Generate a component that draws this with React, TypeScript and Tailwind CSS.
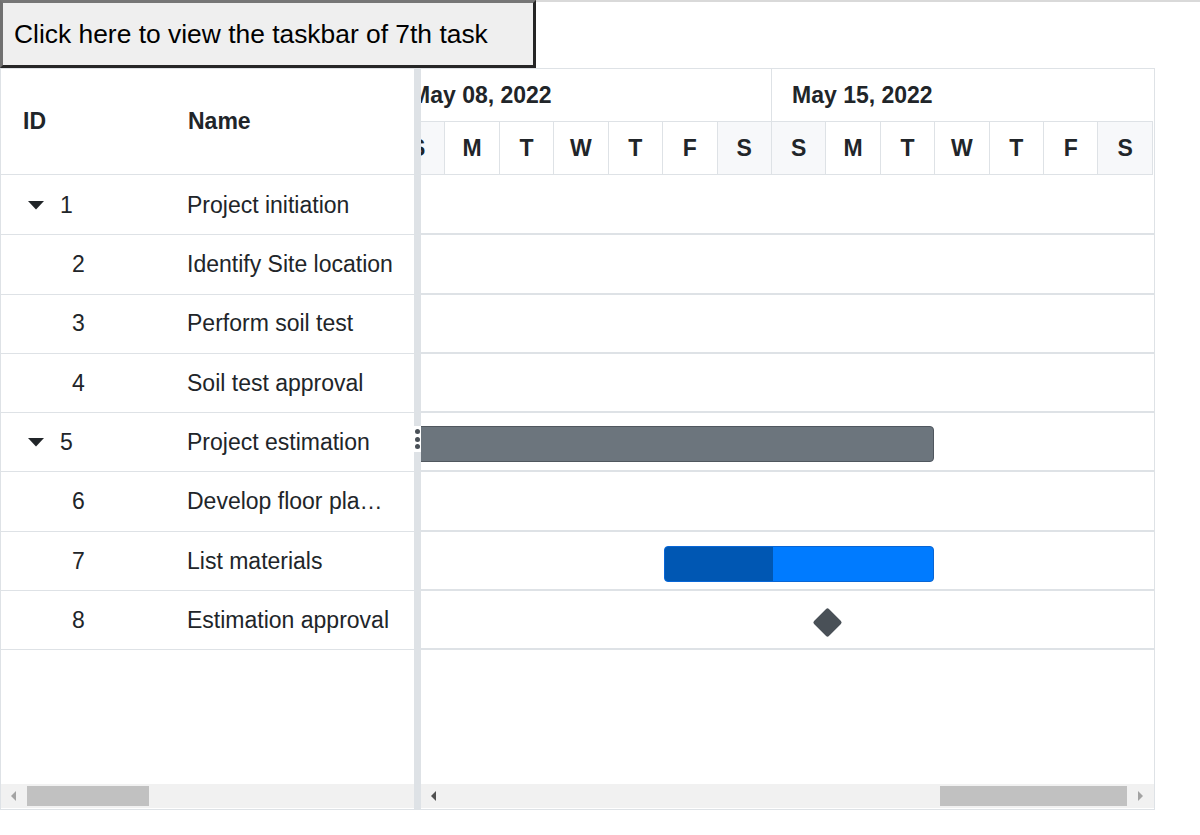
import React from "react";

const rows = [
  { id: 1, name: "Project initiation", parent: true },
  { id: 2, name: "Identify Site location" },
  { id: 3, name: "Perform soil test" },
  { id: 4, name: "Soil test approval" },
  { id: 5, name: "Project estimation", parent: true },
  { id: 6, name: "Develop floor plan for estimation" },
  { id: 7, name: "List materials" },
  { id: 8, name: "Estimation approval" },
];

const days = ["S", "M", "T", "W", "T", "F", "S", "S", "M", "T", "W", "T", "F", "S"];

function Caret() {
  return (
    <svg width="16" height="9" viewBox="0 0 16 9" className="block">
      <path d="M0 0 L16 0 L8 8.5 Z" fill="#212529" />
    </svg>
  );
}

export default function App() {
  return (
    <div className="w-[1200px] h-[835px] bg-white font-['Liberation_Sans',Arial,sans-serif] text-[#212529] overflow-hidden">
      <div className="flex">
        <button className="w-[536px] h-[68px] shrink-0 bg-[#efefef] text-black text-[26.4px] text-left pl-[11px] pt-[2px] border-[3px] border-t-[#767676] border-l-[#707070] border-r-[#262626] border-b-[#262626] font-['Liberation_Sans',Arial,sans-serif]">
          Click here to view the taskbar of 7th task
        </button>
        <div className="flex-1 self-start border-t-2 border-[#d9d9d9]" />
      </div>

      <div className="w-[1155px] h-[742px] border border-[#dee2e6] flex">
        {/* Grid pane */}
        <div className="w-[413px] shrink-0 flex flex-col">
          <div className="h-[106px] shrink-0 border-b border-[#dee2e6] flex items-center text-[23px] font-bold">
            <div className="w-[165px] pl-[22px]">ID</div>
            <div className="pl-[22px]">Name</div>
          </div>
          <div className="flex-1 overflow-hidden pt-[1px]">
            {rows.map((r) => (
              <div key={r.id} className="h-[59.3px] border-b border-[#dee2e6] flex items-center text-[23px]">
                <div className="w-[165px] shrink-0 pl-[22px] flex items-center">
                  {r.parent ? (
                    <>
                      <span className="w-[26px] flex justify-center">
                        <Caret />
                      </span>
                      <span className="ml-[11px]">{r.id}</span>
                    </>
                  ) : (
                    <span className="ml-[49px]">{r.id}</span>
                  )}
                </div>
                <div className="pl-[21px] pr-[20px] min-w-0 flex-1 truncate">{r.name}</div>
              </div>
            ))}
          </div>
          <div className="h-[24px] shrink-0 bg-[#f1f1f1] flex items-center mb-[1px]">
            <span className="ml-[10px] w-0 h-0 border-y-[5px] border-y-transparent border-r-[5px] border-r-[#a3a3a3]" />
            <span className="ml-[11px] w-[122px] h-[20px] bg-[#c1c1c1]" />
          </div>
        </div>

        {/* Splitter */}
        <div className="w-[7px] shrink-0 bg-[#dee2e6] flex flex-col justify-center">
          <div className="h-[26px] bg-white flex flex-col items-center justify-center gap-[2.5px]">
            <span className="w-[5px] h-[5px] rounded-full bg-[#495057]" />
            <span className="w-[5px] h-[5px] rounded-full bg-[#495057]" />
            <span className="w-[5px] h-[5px] rounded-full bg-[#495057]" />
          </div>
        </div>

        {/* Chart pane */}
        <div className="flex-1 min-w-0 flex flex-col overflow-hidden">
          <div className="h-[106px] shrink-0 overflow-hidden">
            <div className="ml-[-30px] w-[762px]">
              <div className="h-[53px] flex border-b border-[#dee2e6] text-[23px] font-bold">
                <div className="w-[381px] shrink-0 border-r border-[#dee2e6] flex items-center pl-[20px]">May 08, 2022</div>
                <div className="w-[381px] shrink-0 flex items-center pl-[20px]">May 15, 2022</div>
              </div>
              <div className="h-[53px] flex border-b border-[#dee2e6] text-[23px] font-bold">
                {days.map((d, i) => (
                  <div
                    key={i}
                    className={
                      "w-[54.43px] shrink-0 border-r border-[#dee2e6] flex items-center justify-center " +
                      (d === "S" ? "bg-[#f7f8fa]" : "bg-white")
                    }
                  >
                    {d}
                  </div>
                ))}
              </div>
            </div>
          </div>
          <div className="flex-1 overflow-hidden pt-[1px]">
            {rows.map((r) => (
              <div key={r.id} className="relative h-[59.3px] border-b-2 border-[#dee2e6]">
                {r.id === 5 && (
                  <div className="absolute left-[-10px] top-[13px] w-[523px] h-[36px] bg-[#6c757d] border border-[#50575e] rounded-[4px]" />
                )}
                {r.id === 7 && (
                  <div className="absolute left-[243px] top-[14px] w-[270px] h-[36px] bg-[#007bff] border border-[#0866d6] rounded-[4px] overflow-hidden">
                    <div className="w-[108px] h-full bg-[#0057b3]" />
                  </div>
                )}
                {r.id === 8 && (
                  <div className="absolute left-[395.5px] top-[21px] w-[21px] h-[21px] rotate-45 bg-[#495057] rounded-[2px]" />
                )}
              </div>
            ))}
          </div>
          <div className="h-[24px] shrink-0 bg-[#f1f1f1] flex items-center mb-[1px]">
            <span className="ml-[10px] w-0 h-0 border-y-[5px] border-y-transparent border-r-[5px] border-r-[#505050]" />
            <span className="flex-1" />
            <span className="w-[187px] h-[20px] bg-[#c1c1c1]" />
            <span className="w-[27px] flex justify-center">
              <span className="w-0 h-0 border-y-[5px] border-y-transparent border-l-[5px] border-l-[#a3a3a3]" />
            </span>
          </div>
        </div>
      </div>
    </div>
  );
}
